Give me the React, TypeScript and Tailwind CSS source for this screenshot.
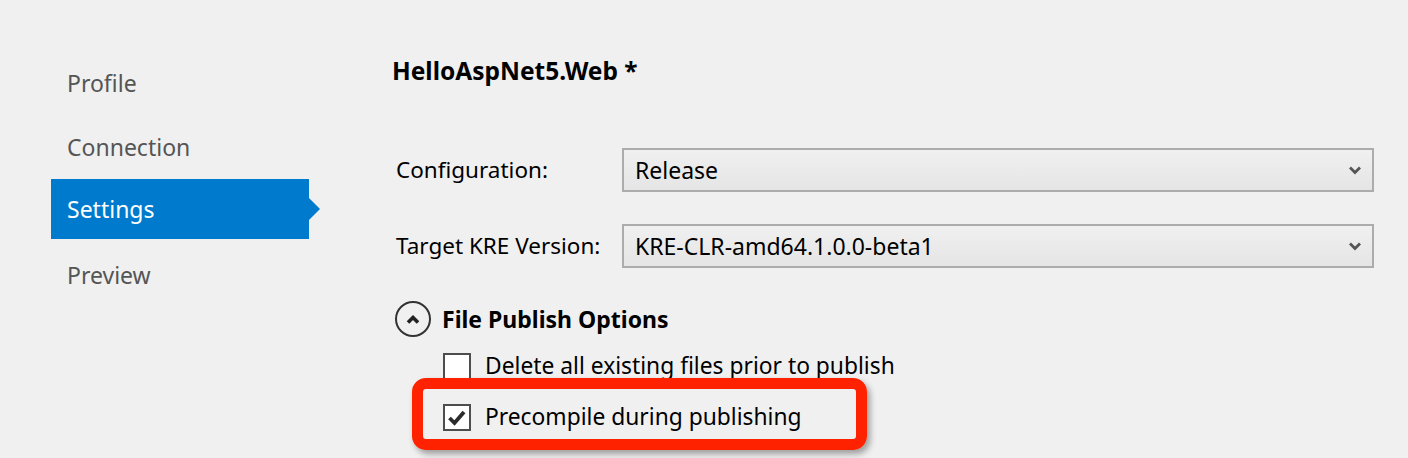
import { ReactNode } from "react";

const navItems = ["Profile", "Connection", "Settings", "Preview"];

function Chevron({ className }: { className?: string }) {
  return (
    <svg width="14" height="10" viewBox="0 0 14 10" className={className}>
      <path d="M2 2.5 L7 7.5 L12 2.5" fill="none" stroke="#555" strokeWidth="2.8" />
    </svg>
  );
}

function Select({ value }: { value: string }) {
  return (
    <div className="flex items-center justify-between w-[752px] h-[44px] border-2 border-[#acacac] bg-gradient-to-b from-[#f0f0f0] to-[#e5e5e5] pl-[11px] pr-[10px]">
      <span className="text-[23px] text-black">{value}</span>
      <Chevron />
    </div>
  );
}

function Row({ label, children }: { label: string; children: ReactNode }) {
  return (
    <div className="flex items-center">
      <span className="w-[230px] pl-[4px] text-[22.5px] text-black">{label}</span>
      {children}
    </div>
  );
}

function Checkbox({ checked, label }: { checked?: boolean; label: string }) {
  return (
    <div className="flex items-center gap-[14px] h-[51px]">
      <div className="w-[28px] h-[27px] border-2 border-[#4d4d4d] bg-white flex items-center justify-center">
        {checked && (
          <svg width="20" height="18" viewBox="0 0 20 18">
            <path d="M2.5 9 L7.5 14 L17 3" fill="none" stroke="#2b2b2b" strokeWidth="3.8" />
          </svg>
        )}
      </div>
      <span className="text-[22.8px] text-black">{label}</span>
    </div>
  );
}

export default function App() {
  return (
    <div
      className="relative w-[1408px] h-[458px] bg-[#f0f0f0] flex overflow-hidden"
      style={{ fontFamily: '"Noto Sans", "Open Sans", sans-serif' }}
    >
      <div className="w-[392px] shrink-0 pl-[51px] pt-[51px] flex flex-col">
        {navItems.map((item) =>
          item === "Settings" ? (
            <div key={item} className="relative w-[258px] h-[60px] mb-[4px] bg-[#007acc] flex items-center pl-[16px]">
              <span className="text-[23px] text-white">{item}</span>
              <div className="absolute left-[258px] top-[19px] w-0 h-0 border-y-[11px] border-y-transparent border-l-[11px] border-l-[#007acc]" />
            </div>
          ) : (
            <div key={item} className="w-[258px] h-[64px] flex items-center pl-[16px]">
              <span className="text-[23px] text-[#555]">{item}</span>
            </div>
          )
        )}
      </div>

      <div className="flex flex-col pt-[55px]">
        <p className="text-[24.5px] font-bold text-black leading-[32px]">HelloAspNet5.Web *</p>
        <div className="mt-[61px] flex flex-col gap-[32px]">
          <Row label="Configuration:">
            <Select value="Release" />
          </Row>
          <Row label="Target KRE Version:">
            <Select value="KRE-CLR-amd64.1.0.0-beta1" />
          </Row>
        </div>
        <div className="mt-[33px] flex items-center gap-[11px] pl-[3px]">
          <div className="w-[36px] h-[36px] rounded-full border-2 border-[#333] flex items-center justify-center">
            <svg width="16" height="12" viewBox="0 0 16 12">
              <path d="M3 9.5 L8 4.5 L13 9.5" fill="none" stroke="#222" strokeWidth="3.6" />
            </svg>
          </div>
          <span className="text-[23px] font-bold text-black">File Publish Options</span>
        </div>
        <div className="pl-[51px] mt-[4px] flex flex-col">
          <Checkbox label="Delete all existing files prior to publish" />
          <Checkbox checked label="Precompile during publishing" />
        </div>
      </div>

      <div className="absolute left-[412px] top-[378px] w-[455px] h-[72px] border-[11px] border-[#ff2200] rounded-[14px] shadow-[3px_4px_6px_rgba(0,0,0,0.35)]" />
    </div>
  );
}
